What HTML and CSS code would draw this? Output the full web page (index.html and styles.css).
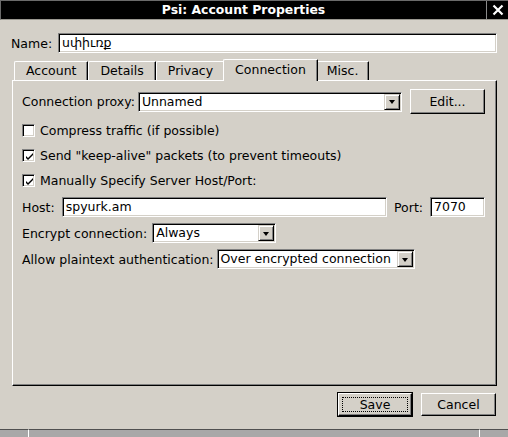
FILE: index.html
```html
<!DOCTYPE html>
<html>
<head>
<meta charset="utf-8">
<link rel="stylesheet" href="styles.css">
</head>
<body>
<div class="window">
  <div class="titlebar">
    <div class="title">Psi: Account Properties</div>
    <div class="close">
      <svg width="12" height="12" viewBox="0 0 12 12"><path d="M1.5 1.5L10.5 10.5M10.5 1.5L1.5 10.5" stroke="#fff" stroke-width="2.2" fill="none"/></svg>
    </div>
  </div>
  <div class="content">
    <div class="name-row">
      <span class="name-lbl">Name:</span>
      <div class="field name-field">սփիւռք</div>
    </div>
    <div class="tabs">
      <div class="tab">Account</div>
      <div class="tab">Details</div>
      <div class="tab">Privacy</div>
      <div class="tab active">Connection</div>
      <div class="tab tab-misc">Misc.</div>
    </div>
    <div class="pane">
      <div class="row proxy-row">
        <span class="lbl">Connection proxy:</span>
        <div class="combo combo-proxy"><span class="combo-text">Unnamed</span><span class="arrow"><i></i></span></div>
        <div class="btn edit-btn">Edit...</div>
      </div>
      <div class="row check-row first-check">
        <span class="check"></span><span>Compress traffic (if possible)</span>
      </div>
      <div class="row check-row">
        <span class="check"><svg width="9" height="9" viewBox="0 0 9 9"><path d="M1 4L3 6L8 1V3L3 8L1 6Z" fill="#000"/></svg></span><span>Send "keep-alive" packets (to prevent timeouts)</span>
      </div>
      <div class="row check-row">
        <span class="check"><svg width="9" height="9" viewBox="0 0 9 9"><path d="M1 4L3 6L8 1V3L3 8L1 6Z" fill="#000"/></svg></span><span>Manually Specify Server Host/Port:</span>
      </div>
      <div class="row host-row">
        <span class="lbl">Host:</span>
        <div class="field host-field">spyurk.am</div>
        <span class="lbl port-lbl">Port:</span>
        <div class="field port-field">7070</div>
      </div>
      <div class="row sel-row">
        <span class="lbl">Encrypt connection:</span>
        <div class="combo combo-encrypt"><span class="combo-text">Always</span><span class="arrow"><i></i></span></div>
      </div>
      <div class="row sel-row">
        <span class="lbl auth-lbl">Allow plaintext authentication:</span>
        <div class="combo combo-auth"><span class="combo-text">Over encrypted connection</span><span class="arrow"><i></i></span></div>
      </div>
    </div>
    <div class="actions">
      <div class="btn-default"><div class="btn save-btn"><span class="focus">Save</span></div></div>
      <div class="btn cancel-btn">Cancel</div>
    </div>
  </div>
  <div class="statusbar">
    <div class="seg seg-left"></div>
    <div class="seg seg-mid"></div>
    <div class="seg seg-right"></div>
  </div>
</div>
</body>
</html>
```

FILE: styles.css
```css
* { box-sizing: border-box; }
html, body { margin: 0; padding: 0; }
body {
  width: 508px;
  height: 437px;
  overflow: hidden;
  background: #d4d0c8;
  font-family: "DejaVu Sans", "Noto Sans", sans-serif;
  font-size: 12.5px;
  color: #000;
}
.window { display: flex; flex-direction: column; height: 437px; }

.titlebar {
  height: 20px;
  display: flex;
  background: #000;
  color: #fff;
  border-top: 1px solid #6a6a6a;
  border-left: 1px solid #6a6a6a;
  border-bottom: 1px solid #9a9890;
}
.title {
  flex: 1;
  text-align: center;
  font-weight: bold;
  font-size: 12.4px;
  line-height: 18px;
}
.close {
  width: 22px;
  border-left: 1px solid #8a8a8a;
  display: flex;
  align-items: center;
  justify-content: center;
}

.content {
  flex: 1;
  display: flex;
  flex-direction: column;
  padding: 13px 11px 0 11px;
}

.name-row { display: flex; align-items: center; height: 20px; }
.name-lbl { width: 47px; }
.field {
  background: #fff;
  border: 1px solid;
  border-color: #808080 #fff #fff #808080;
  box-shadow: inset 1px 1px 0 #000, inset -1px -1px 0 #d4d0c8;
  padding: 0 3px;
  height: 20px;
  line-height: 18px;
  white-space: nowrap;
  overflow: hidden;
}
.name-field { flex: 1; }

.tabs {
  display: flex;
  align-items: flex-end;
  height: 21px;
  margin-top: 6px;
  padding-left: 3px;
  position: relative;
  z-index: 1;
}
.tab {
  height: 19px;
  padding: 0 11px;
  line-height: 18px;
  border-top: 1px solid #fff;
  border-left: 1px solid #fff;
  border-right: 1px solid #000;
  border-top-left-radius: 2px;
  border-top-right-radius: 1px;
  box-shadow: inset -1px 0 0 #808080;
  background: #d4d0c8;
}
.tab.active {
  height: 22px;
  margin: 0 -2px -1px -2px;
  padding: 0 11px;
  line-height: 19px;
  position: relative;
  z-index: 2;
}
.tab.tab-misc { padding: 0 10px; }

.pane {
  height: 306px;
  margin-left: 1px;
  border: 1px solid;
  border-color: #fff #000 #000 #fff;
  box-shadow: inset -1px -1px 0 #808080;
  padding: 8px 11px 0 9px;
  display: flex;
  flex-direction: column;
}
.row { display: flex; align-items: center; height: 25px; white-space: nowrap; }
.proxy-row .lbl { margin-right: 3px; }
.combo {
  display: flex;
  height: 20px;
  background: #fff;
  border: 1px solid;
  border-color: #808080 #fff #fff #808080;
  box-shadow: inset 1px 1px 0 #000, inset -1px -1px 0 #d4d0c8;
  padding: 1px;
}
.combo-text { flex: 1; padding-left: 2px; line-height: 16px; overflow: hidden; }
.arrow {
  width: 16px;
  height: 16px;
  background: #d4d0c8;
  border: 1px solid;
  border-color: #d4d0c8 #000 #000 #d4d0c8;
  box-shadow: inset 1px 1px 0 #fff, inset -1px -1px 0 #808080;
  display: flex;
  align-items: center;
  justify-content: center;
}
.arrow i {
  display: block;
  width: 0;
  height: 0;
  border-left: 3.5px solid transparent;
  border-right: 3.5px solid transparent;
  border-top: 4px solid #000;
  margin-top: 1px;
}
.combo-proxy { flex: 1; }
.edit-btn { width: 75px; height: 25px; margin-left: 8px; }

.btn {
  display: flex;
  align-items: center;
  justify-content: center;
  background: #d4d0c8;
  border: 1px solid;
  border-color: #fff #000 #000 #fff;
  box-shadow: inset -1px -1px 0 #808080;
}

.first-check { margin-top: 4px; }
.check {
  width: 13px;
  height: 13px;
  margin-right: 5px;
  background: #fff;
  border: 1px solid;
  border-color: #808080 #fff #fff #808080;
  box-shadow: inset 1px 1px 0 #000, inset -1px -1px 0 #d4d0c8;
  display: flex;
  align-items: center;
  justify-content: center;
  padding: 1px 0 0 1px;
}

.host-row { margin-top: 1px; height: 26px; }
.host-row .lbl { margin-right: 7px; }
.host-field { flex: 1; }
.host-row .port-lbl { margin-left: 7px; margin-right: 7px; }
.port-field { width: 55px; }

.sel-row { height: 26px; }
.sel-row .lbl { margin-right: 5px; }
.sel-row .auth-lbl { margin-right: 3px; }
.combo-encrypt { width: 124px; }
.combo-auth { width: 198px; }

.actions {
  display: flex;
  justify-content: flex-end;
  align-items: center;
  margin-top: 6px;
  padding-right: 1px;
}
.btn-default {
  width: 76px;
  height: 25px;
  border: 1px solid #000;
  display: flex;
}
.save-btn { flex: 1; padding: 3px; }
.focus {
  flex: 1;
  align-self: stretch;
  border: 1px dotted #000;
  display: flex;
  align-items: center;
  justify-content: center;
}
.cancel-btn { width: 75px; height: 23px; margin-left: 8px; }

.statusbar {
  height: 9px;
  display: flex;
  border-top: 1px solid #d4d0c8;
}
.seg { background: #a8a8a8; border-top: 1px solid #505050; }
.seg-left { width: 29px; border-right: 1px solid #fff; }
.seg-mid { flex: 1; border-right: 1px solid #fff; }
.seg-right { width: 28px; }
```
